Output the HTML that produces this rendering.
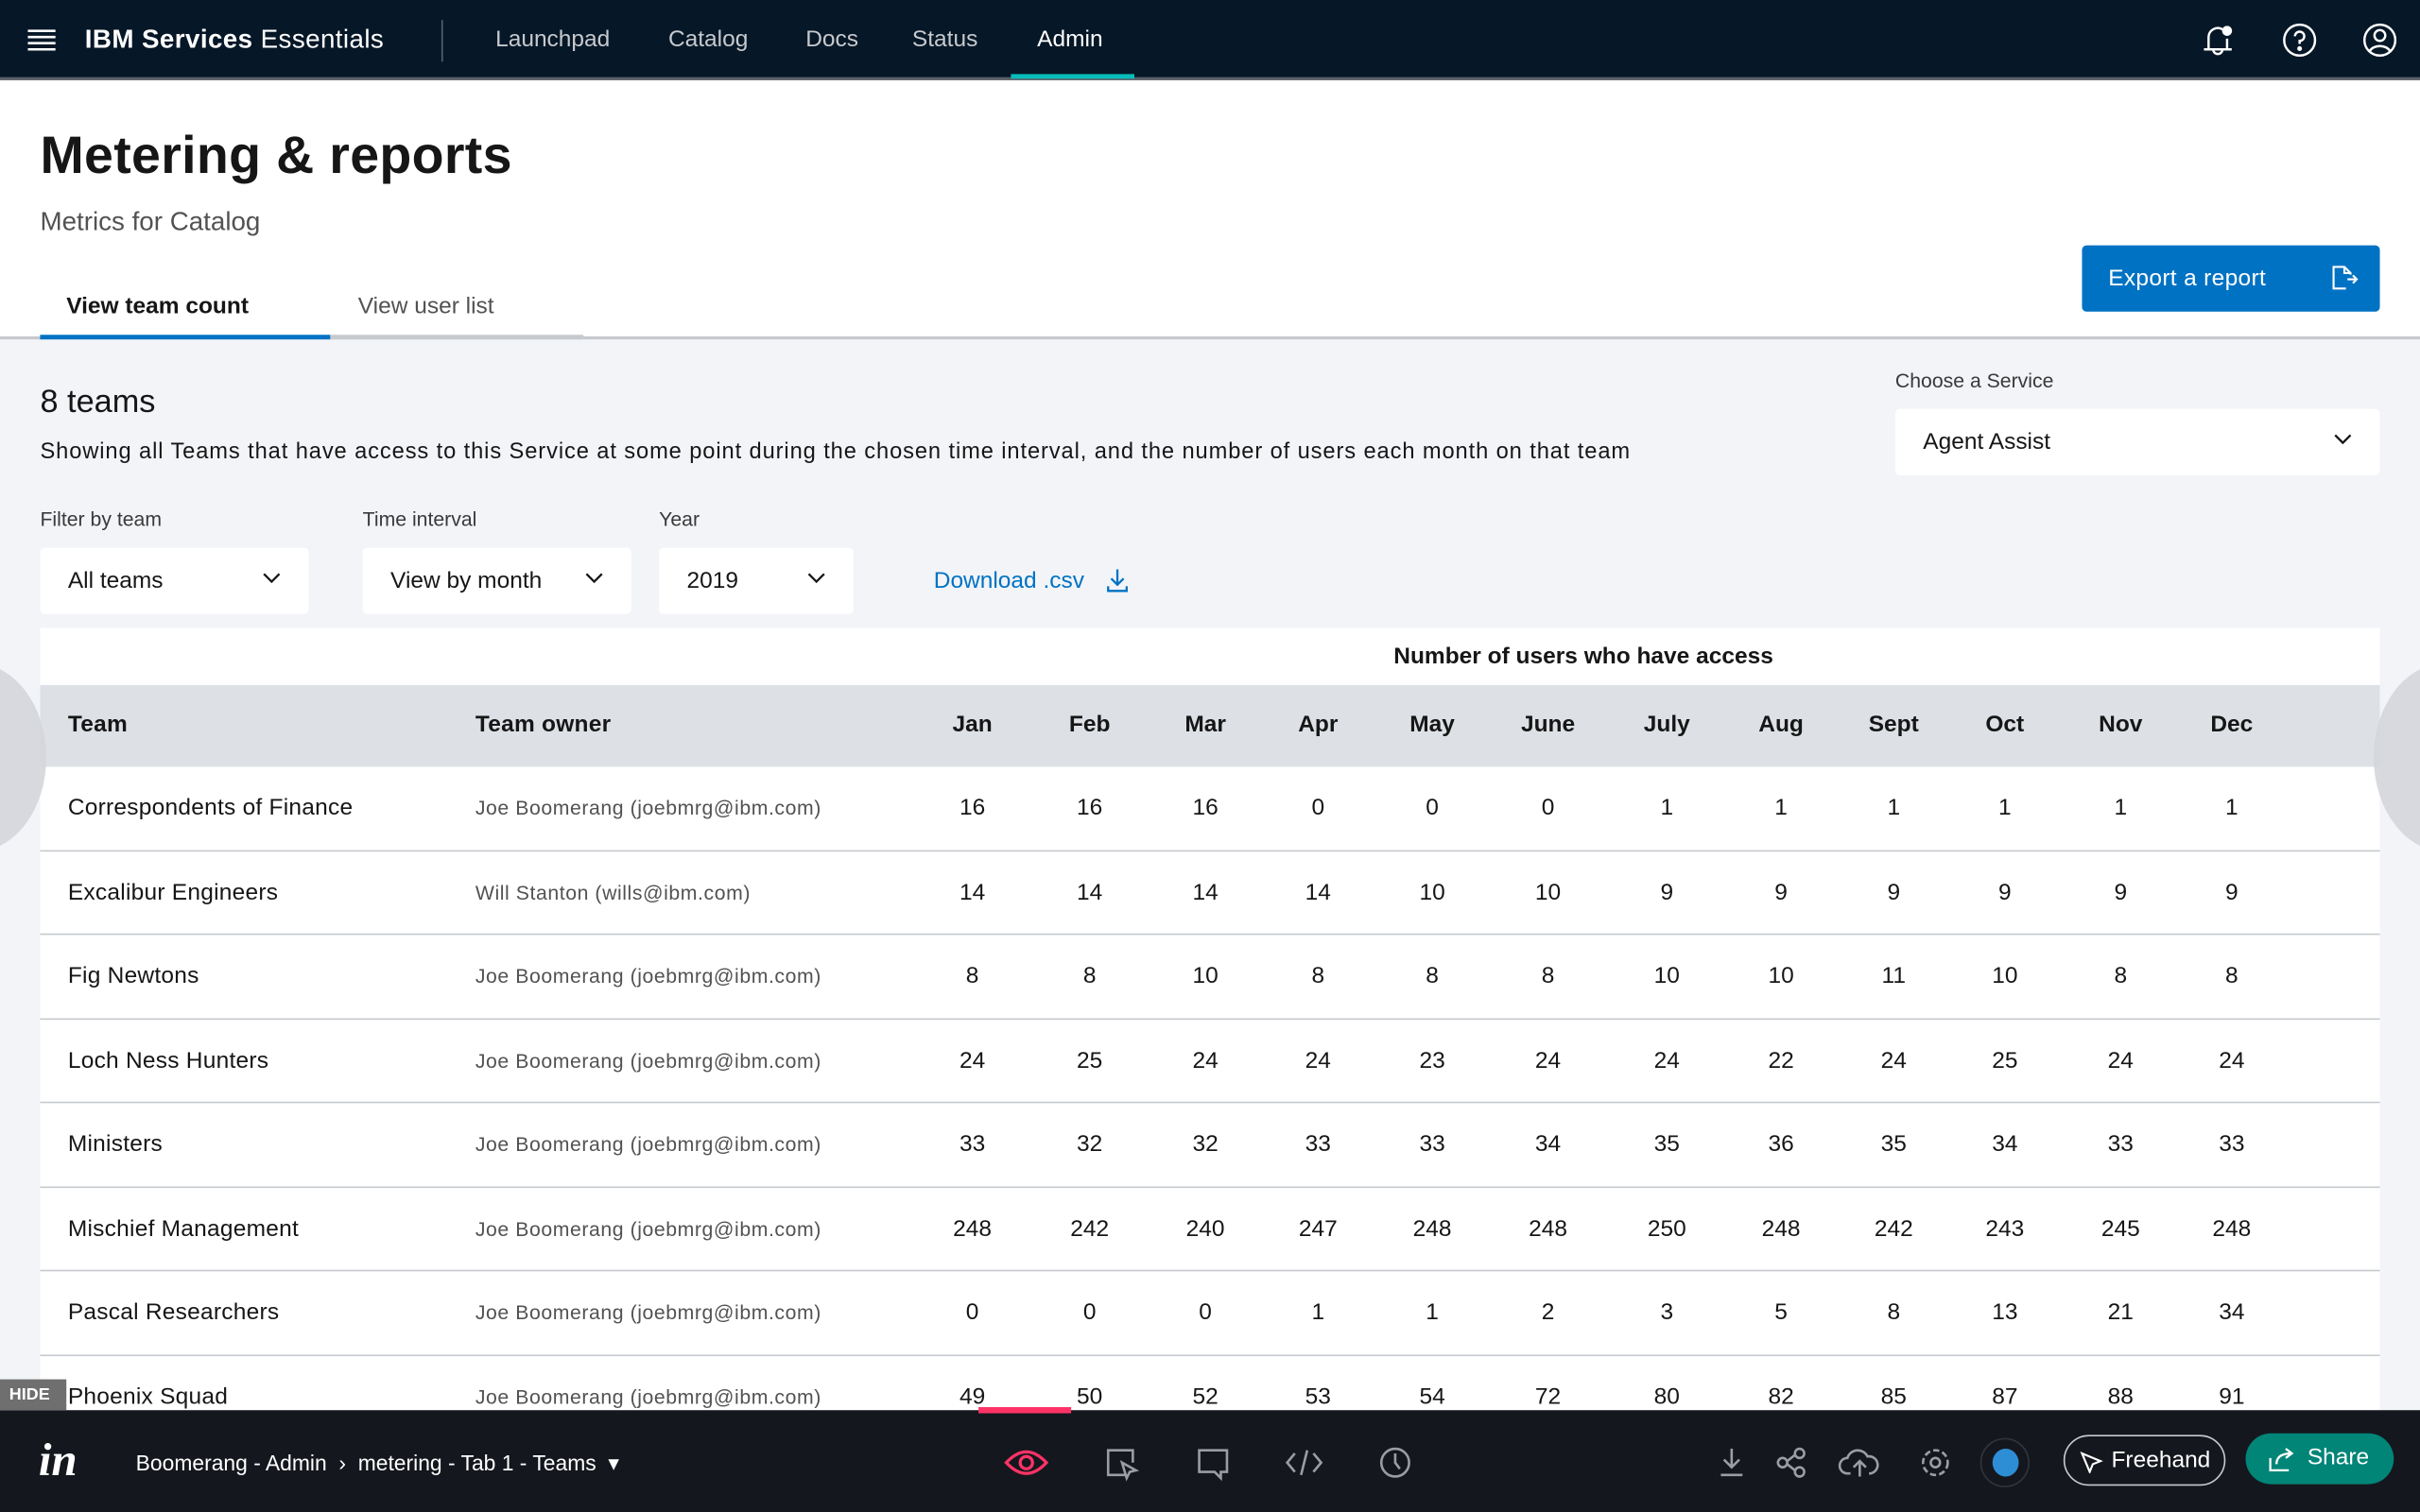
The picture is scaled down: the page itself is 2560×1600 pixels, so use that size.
<!DOCTYPE html>
<html><head><meta charset="utf-8"><style>
*{box-sizing:border-box;margin:0;padding:0}
html,body{width:2560px;height:1600px;overflow:hidden;background:#f2f4f8}
#w{position:absolute;left:0;top:0;width:1568px;height:980px;transform:scale(1.632653);transform-origin:0 0;font-family:"Liberation Sans",sans-serif;color:#161616;background:#f2f4f8;overflow:hidden}
.a{position:absolute}
.hdr{left:0;top:0;width:1568px;height:52px;background:#061727;border-bottom:2px solid #5a6068}
.nav{top:17px;font-size:15px;color:#c6c9ce}
.top{left:0;top:52px;width:1568px;height:168px;background:#fff;border-bottom:2px solid #c6c9ce}
.lbl{font-size:13px;color:#393939}
.dd{background:#fff;border-radius:3px;height:43px;font-size:15px;padding:13px 0 0 18px}
.dd svg{position:absolute;right:18px;top:16px}
.tbl{left:26px;top:407px;width:1516px;height:510px;background:#fff}
.th{left:26px;top:444px;width:1516px;height:53px;background:#dde1e6}
.row{left:26px;width:1516px;height:54.5px;border-bottom:1px solid #c6c9ce}
.c{position:absolute;width:70px;text-align:center;font-size:15px}
.t{position:absolute;font-size:15px;letter-spacing:.15px}
.o{position:absolute;font-size:13px;color:#525252;letter-spacing:.35px}
.bar{left:0;top:914px;width:1568px;height:66px;background:#15171e}
</style></head><body><div id="w">
<div class="a hdr"></div>
<svg class="a" style="left:18px;top:19px" width="18" height="14"><path d="M0 1H18M0 5H18M0 9H18M0 13H18" stroke="#fff" stroke-width="1.6"/></svg>
<div class="a" style="left:55px;top:16px;font-size:17px;color:#fff;letter-spacing:.25px"><b>IBM Services</b> Essentials</div>
<div class="a" style="left:286px;top:13px;width:1px;height:27px;background:#5a6068"></div>
<div class="a nav" style="left:321px">Launchpad</div>
<div class="a nav" style="left:433px">Catalog</div>
<div class="a nav" style="left:522px">Docs</div>
<div class="a nav" style="left:591px">Status</div>
<div class="a nav" style="left:672px;color:#fff">Admin</div>
<div class="a" style="left:655px;top:48px;width:80px;height:3px;background:#08bdba"></div>
<svg class="a" style="left:1425px;top:14px" width="26" height="24" fill="none" stroke="#fff" stroke-width="1.5"><path d="M6 18V10a6 6 0 0 1 9-5M18 11v7M3 18H21M9 18a3 3 0 0 0 6 0"/><circle cx="18" cy="6" r="2.5" fill="#fff"/></svg>
<svg class="a" style="left:1478px;top:14px" width="24" height="24" fill="none" stroke="#fff" stroke-width="1.5"><circle cx="12" cy="12" r="10"/><path d="M9 9.5a3 3 0 1 1 3 3v2"/><circle cx="12" cy="17.5" r=".8" fill="#fff"/></svg>
<svg class="a" style="left:1530px;top:14px" width="24" height="24" fill="none" stroke="#fff" stroke-width="1.5"><circle cx="12" cy="12" r="10"/><circle cx="12" cy="9" r="3.5"/><path d="M5.5 19a7 5 0 0 1 13 0"/></svg>

<div class="a top"></div>
<div class="a" style="left:26px;top:82px;font-size:34px;font-weight:bold;color:#161616;letter-spacing:.2px">Metering &amp; reports</div>
<div class="a" style="left:26px;top:134px;font-size:17px;color:#525252">Metrics for Catalog</div>
<div class="a" style="left:43px;top:190px;font-size:15px;font-weight:bold">View team count</div>
<div class="a" style="left:232px;top:190px;font-size:15px;color:#525252">View user list</div>
<div class="a" style="left:26px;top:217px;width:188px;height:3px;background:#0072c3"></div>
<div class="a" style="left:214px;top:217px;width:164px;height:3px;background:#c6c9ce"></div>
<div class="a" style="left:1349px;top:159px;width:193px;height:43px;background:#0072c3;border-radius:3px;color:#fff;font-size:15px;padding:13px 0 0 17px;letter-spacing:.2px">Export a report</div>
<svg class="a" style="left:1509px;top:171px" width="20" height="20" fill="none" stroke="#fff" stroke-width="1.3"><path d="M12 10H18M15.5 7.5 18 10l-2.5 2.5M11 16H3V2h7l4 4v1M10 2v4h4"/></svg>

<div class="a" style="left:26px;top:249px;font-size:21px">8 teams</div>
<div class="a" style="left:26px;top:285px;font-size:14.5px;letter-spacing:.55px">Showing all Teams that have access to this Service at some point during the chosen time interval, and the number of users each month on that team</div>
<div class="a lbl" style="left:1228px;top:239px">Choose a Service</div>
<div class="a dd" style="left:1228px;top:265px;width:314px">Agent Assist<svg width="12" height="8"><path d="M1 1l5 5 5-5" stroke="#161616" stroke-width="1.4" fill="none"/></svg></div>
<div class="a lbl" style="left:26px;top:329px">Filter by team</div>
<div class="a dd" style="left:26px;top:355px;width:174px">All teams<svg width="12" height="8"><path d="M1 1l5 5 5-5" stroke="#161616" stroke-width="1.4" fill="none"/></svg></div>
<div class="a lbl" style="left:235px;top:329px">Time interval</div>
<div class="a dd" style="left:235px;top:355px;width:174px">View by month<svg width="12" height="8"><path d="M1 1l5 5 5-5" stroke="#161616" stroke-width="1.4" fill="none"/></svg></div>
<div class="a lbl" style="left:427px;top:329px">Year</div>
<div class="a dd" style="left:427px;top:355px;width:126px">2019<svg width="12" height="8"><path d="M1 1l5 5 5-5" stroke="#161616" stroke-width="1.4" fill="none"/></svg></div>
<div class="a" style="left:605px;top:368px;font-size:15px;color:#0072c3">Download .csv</div>
<svg class="a" style="left:716px;top:368px" width="16" height="16" fill="none" stroke="#0072c3" stroke-width="1.4"><path d="M8 1v10M4 7l4 4 4-4M2 12v3h12v-3"/></svg>

<div class="a tbl"></div>
<div class="a" style="left:903px;top:417px;font-size:15px;font-weight:bold">Number of users who have access</div>
<div class="a th"></div>
<div id="rows"></div>
<div class="a" style="left:-62px;top:430px;width:92px;height:122px;border-radius:50%;background:#d4d6da;opacity:.9"></div>
<div class="a" style="left:1538px;top:430px;width:92px;height:122px;border-radius:50%;background:#d4d6da;opacity:.9"></div>

<div class="a bar"></div>
<div class="a" style="left:634px;top:912px;width:60px;height:4px;background:#ff3366"></div>
<div class="a" style="left:0;top:894px;width:43px;height:20px;background:#6f6f6f;color:#fff;font-size:11px;font-weight:bold;padding:4px 0 0 6px">HIDE</div>
<div class="a" style="left:25px;top:930px;font-size:30px;color:#fff;font-style:italic;font-family:'Liberation Serif',serif;font-weight:bold">in</div>
<div class="a" style="left:88px;top:940px;font-size:14px;color:#fff">Boomerang - Admin &nbsp;›&nbsp; metering - Tab 1 - Teams &nbsp;▾</div>
<svg class="a" style="left:650px;top:936px" width="30" height="24" fill="none" stroke="#ff3366" stroke-width="2"><path d="M2 12Q15 -2 28 12Q15 26 2 12Z"/><circle cx="15" cy="12" r="4"/></svg>
<svg class="a" style="left:715px;top:937px" width="24" height="24" fill="none" stroke="#9a9da5" stroke-width="1.6"><path d="M14 19H3V3h16v8M12 11l3 10 2-4 4-1z"/></svg>
<svg class="a" style="left:774px;top:937px" width="24" height="24" fill="none" stroke="#9a9da5" stroke-width="1.6"><path d="M3 3h18v14h-4v4l-4-4H3z"/></svg>
<svg class="a" style="left:832px;top:937px" width="26" height="22" fill="none" stroke="#9a9da5" stroke-width="1.6"><path d="M7 5 2 11l5 6M19 5l5 6-5 6M15 3l-4 16"/></svg>
<svg class="a" style="left:893px;top:937px" width="22" height="22" fill="none" stroke="#9a9da5" stroke-width="1.6"><circle cx="11" cy="11" r="9"/><path d="M11 5v6l3 4"/></svg>
<svg class="a" style="left:1112px;top:937px" width="20" height="22" fill="none" stroke="#9a9da5" stroke-width="1.6"><path d="M10 2v12M5 9l5 5 5-5M3 19h14"/></svg>
<svg class="a" style="left:1150px;top:937px" width="22" height="22" fill="none" stroke="#9a9da5" stroke-width="1.6"><circle cx="5" cy="11" r="3"/><circle cx="16" cy="5" r="3"/><circle cx="16" cy="17" r="3"/><path d="M8 10l5-4M8 12l5 4"/></svg>
<svg class="a" style="left:1191px;top:937px" width="28" height="22" fill="none" stroke="#9a9da5" stroke-width="1.6"><path d="M8 18H6a5 5 0 0 1 0-10 7 7 0 0 1 13-1 5 5 0 0 1 2 11h-1M14 20v-9M10 14l4-4 4 4"/></svg>
<svg class="a" style="left:1243px;top:937px" width="22" height="22" fill="none" stroke="#9a9da5" stroke-width="1.6"><circle cx="11" cy="11" r="3"/><circle cx="11" cy="11" r="8" stroke-dasharray="4 2"/></svg>
<div class="a" style="left:1283px;top:932px;width:32px;height:32px;border-radius:50%;border:1px solid #30343d"></div>
<div class="a" style="left:1291px;top:939px;width:17px;height:18px;border-radius:50%;background:#2d8ed6"></div>
<div class="a" style="left:1337px;top:930px;width:105px;height:33px;border:1px solid #c6c9ce;border-radius:17px;color:#fff;font-size:15px;padding:7px 0 0 30px">Freehand</div>
<svg class="a" style="left:1347px;top:939px" width="16" height="16" fill="none" stroke="#fff" stroke-width="1.3"><path d="M2 3l12 5-5 2-2 5z"/></svg>
<div class="a" style="left:1455px;top:929px;width:96px;height:33px;background:#008577;border-radius:17px;color:#fff;font-size:15px;padding:7px 0 0 40px">Share</div>
<svg class="a" style="left:1469px;top:937px" width="18" height="18" fill="none" stroke="#fff" stroke-width="1.4"><path d="M2 8v8h12M6 12q0-7 10-7M12 2l4 3-4 3"/></svg>

<script>
var cols=[630,706,781,854,928,1003,1080,1154,1227,1299,1374,1446];
var mon=["Jan","Feb","Mar","Apr","May","June","July","Aug","Sept","Oct","Nov","Dec"];
var d=[["Correspondents of Finance","Joe Boomerang (joebmrg@ibm.com)",[16,16,16,0,0,0,1,1,1,1,1,1]],
["Excalibur Engineers","Will Stanton (wills@ibm.com)",[14,14,14,14,10,10,9,9,9,9,9,9]],
["Fig Newtons","Joe Boomerang (joebmrg@ibm.com)",[8,8,10,8,8,8,10,10,11,10,8,8]],
["Loch Ness Hunters","Joe Boomerang (joebmrg@ibm.com)",[24,25,24,24,23,24,24,22,24,25,24,24]],
["Ministers","Joe Boomerang (joebmrg@ibm.com)",[33,32,32,33,33,34,35,36,35,34,33,33]],
["Mischief Management","Joe Boomerang (joebmrg@ibm.com)",[248,242,240,247,248,248,250,248,242,243,245,248]],
["Pascal Researchers","Joe Boomerang (joebmrg@ibm.com)",[0,0,0,1,1,2,3,5,8,13,21,34]],
["Phoenix Squad","Joe Boomerang (joebmrg@ibm.com)",[49,50,52,53,54,72,80,82,85,87,88,91]]];
var h='<div class="t" style="left:44px;top:461px;font-weight:bold">Team</div><div class="t" style="left:308px;top:461px;font-weight:bold">Team owner</div>';
mon.forEach(function(m,i){h+='<div class="c" style="left:'+(cols[i]-35)+'px;top:461px;font-weight:bold">'+m+'</div>';});
d.forEach(function(r,k){var y=497+k*54.5;
if(k<7)h+='<div class="a row" style="top:'+y+'px"></div>';
var ty=y+18;
h+='<div class="t" style="left:44px;top:'+ty+'px">'+r[0]+'</div><div class="o" style="left:308px;top:'+(ty+1)+'px">'+r[1]+'</div>';
r[2].forEach(function(v,i){h+='<div class="c" style="left:'+(cols[i]-35)+'px;top:'+ty+'px">'+v+'</div>';});});
document.getElementById('rows').innerHTML=h;
</script>
</div></body></html>
